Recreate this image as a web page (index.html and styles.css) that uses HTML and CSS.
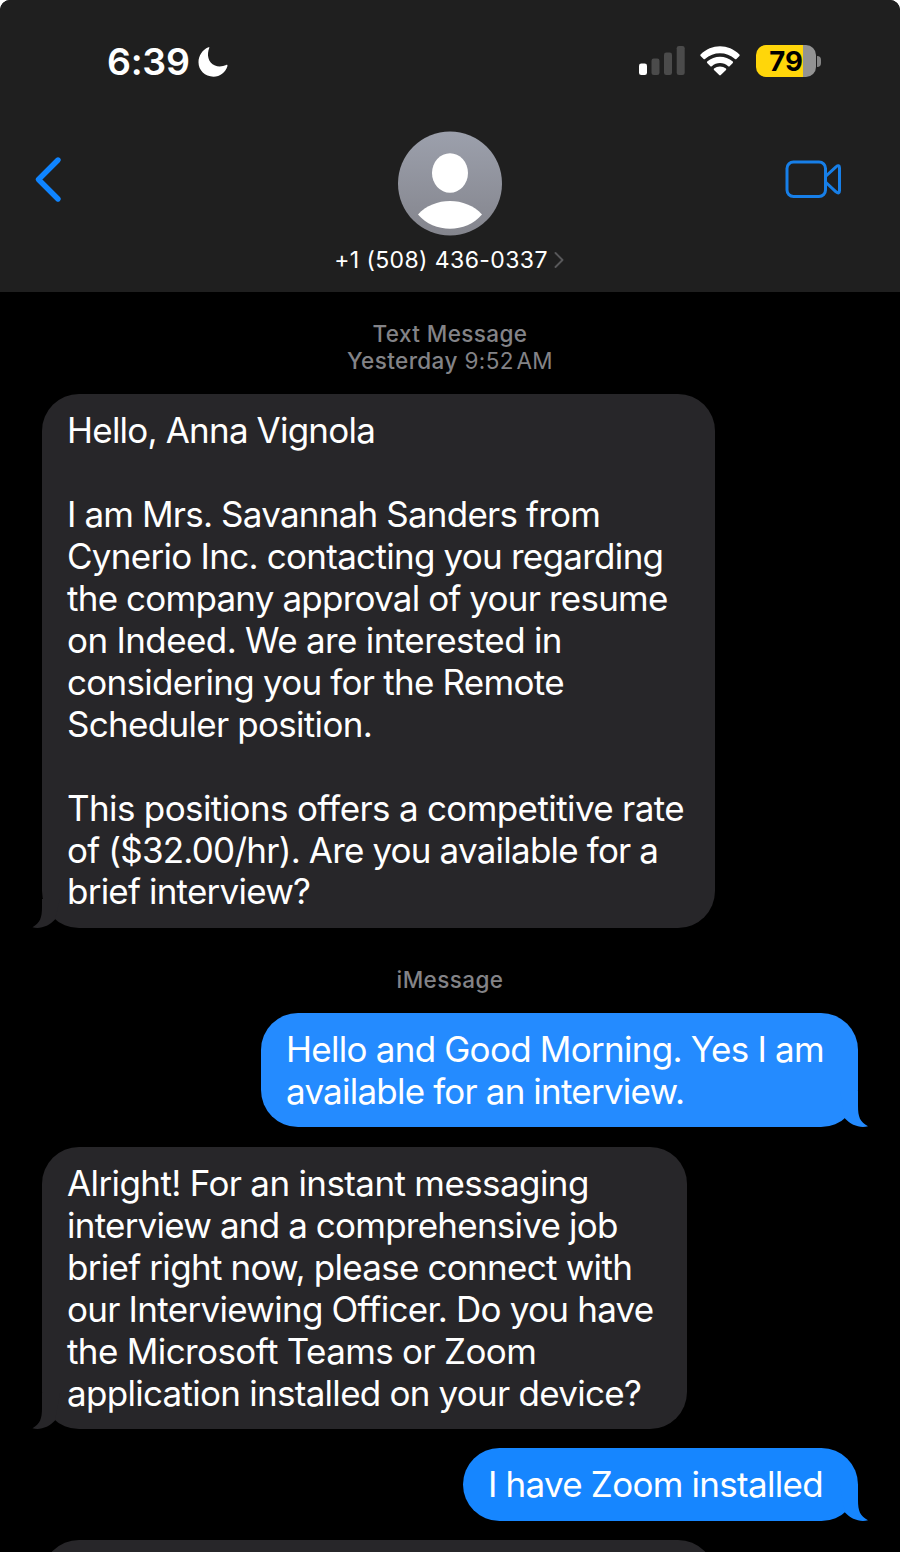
FILE: index.html
```html
<!DOCTYPE html>
<html lang="en">
<head>
  <meta charset="UTF-8" />
  <meta name="viewport" content="width=device-width, initial-scale=1.0" />
  <title>Messages</title>
  <link rel="stylesheet" href="styles.css">
</head>
<body>
  <div class="phone">
    <header class="header">
      <div class="status-bar">
        <div class="clock">
          <span class="time">6:39</span>
          <svg class="moon" width="30" height="30" viewBox="0 0 30 30">
            <path d="M11.4 0.6 C8.500 8 10 15.500 17 18.600 C20.500 20 25 19.500 28.200 18 C29.200 17.500 29.700 18.200 29.400 19.200 C27.500 25.500 22 29.700 15.500 29.700 C7 29.700 0.500 23.300 0.500 15.300 C0.500 8.500 4.500 2.800 10.400 0.300 C11 0 11.700 0.100 11.400 0.600 Z" fill="#fff"/>
          </svg>
        </div>
        <div class="indicators">
          <svg class="signal" width="46" height="30" viewBox="0 0 46 30">
            <rect x="0" y="17.500" width="8" height="11.500" rx="2.300" fill="#fff"/>
            <rect x="12.500" y="12.500" width="8" height="16.500" rx="2.300" fill="#4b4b4b"/>
            <rect x="25" y="6.500" width="8" height="22.500" rx="2.300" fill="#4b4b4b"/>
            <rect x="37.700" y="0" width="8" height="29" rx="2.300" fill="#4b4b4b"/>
          </svg>
          <svg class="wifi" width="40" height="30" viewBox="0 0 40 30">
            <g fill="#fff">
              <path d="M0.600 8.600 C11.500 -2.500 28.500 -2.500 39.400 8.600 Q40 9.300 39.400 10 L36.400 13 Q35.700 13.600 35 13 C26.500 5.300 13.500 5.300 5 13 Q4.300 13.600 3.600 13 L0.600 10 Q0 9.300 0.600 8.600 Z"/>
              <path d="M7.200 15.600 C14.500 9 25.500 9 32.800 15.600 Q33.400 16.300 32.800 17 L29.600 20.200 Q28.900 20.800 28.200 20.200 C23.500 16 16.500 16 11.800 20.200 Q11.100 20.800 10.400 20.200 L7.200 17 Q6.600 16.300 7.200 15.600 Z"/>
              <path d="M14 22.600 C17.500 19.800 22.500 19.800 26 22.600 Q26.600 23.300 26 23.900 L20.800 29.100 Q20 29.800 19.200 29.100 L14 23.900 Q13.400 23.300 14 22.600 Z"/>
            </g>
          </svg>
          <div class="battery">
            <div class="battery-body">79</div>
            <div class="battery-cap"></div>
          </div>
        </div>
      </div>

      <div class="nav">
        <svg class="back" width="30" height="48" viewBox="0 0 30 48">
          <path d="M25 5 L5.500 24.500 L25 44" fill="none" stroke="#0f84ff" stroke-width="5.400" stroke-linecap="round" stroke-linejoin="round"/>
        </svg>
        <div class="contact">
          <svg class="avatar" width="104" height="105" viewBox="0 0 104 105">
            <defs>
              <linearGradient id="avatar-bg" x1="0" y1="0" x2="0" y2="1">
                <stop offset="0" stop-color="#9ca0ac"/>
                <stop offset="1" stop-color="#84858d"/>
              </linearGradient>
            </defs>
            <circle cx="52" cy="52.500" r="52" fill="url(#avatar-bg)"/>
            <ellipse cx="52" cy="42" rx="18" ry="19.700" fill="#fff"/>
            <path d="M20 83.500 C36 65.500 68 65.500 84 83.500 C68 102.500 36 102.500 20 83.500 Z" fill="#fff"/>
          </svg>
          <div class="number">
            <span>+1 (508) 436-0337</span>
            <svg width="10" height="18" viewBox="0 0 10 18">
              <path d="M1.500 2 L8.500 9 L1.500 16" fill="none" stroke="#58585a" stroke-width="1.900" stroke-linecap="round" stroke-linejoin="round"/>
            </svg>
          </div>
        </div>
        <svg class="video" width="58" height="40" viewBox="0 0 58 40">
          <g fill="none" stroke="#177fe8" stroke-width="3" stroke-linejoin="round">
            <rect x="2" y="2" width="38.500" height="34.500" rx="6.500"/>
            <path d="M41 16 L51 6.800 Q54.500 4 54.500 8 V30.500 Q54.500 34.500 51 31.800 L41 22.500"/>
          </g>
        </svg>
      </div>
    </header>

    <main class="chat">
      <div class="stamp"><b>Text Message</b><br><b>Yesterday</b> 9:52&#8202;AM</div>

      <div class="bubble received first">
        <p><span class="tight">Hello, Anna Vignola</span></p>
        <p><span class="tight">I am Mrs. Savannah Sanders from</span><br>
          Cynerio Inc. contacting you regarding<br>
          <span class="tight">the company approval of your resume</span><br>
          <span class="loose">on Indeed. We are interested in</span><br>
          considering you for the Remote<br>
          Scheduler position.</p>
        <p><span class="loose">This positions offers a competitive rate</span><br>
          <span class="tight">of ($32.00/hr). Are you available for a</span><br>
          <span class="tight">brief interview?</span></p>
        <svg class="tail" width="30" height="44" viewBox="0 0 30 44">
          <path d="M10 14 V22 C10 33 8 38 0.500 42.200 C8 44.500 17 41 23 34.500 L28 14 Z"/>
        </svg>
      </div>

      <div class="stamp service"><b>iMessage</b></div>

      <div class="bubble sent morning">
        <p>Hello and Good Morning. Yes I am<br>
          <span class="tight">available for an interview.</span></p>
        <svg class="tail" width="30" height="44" viewBox="0 0 30 44">
          <path d="M10 7 V22 C10 33 8 38 0 42.200 C8 44.500 17 41 23 34.500 L28 7 Z"/>
        </svg>
      </div>

      <div class="bubble received alright">
        <p><span class="loose">Alright! For an instant messaging</span><br>
          <span class="tight">interview and a comprehensive job</span><br>
          brief right now, please connect with<br>
          our Interviewing Officer. Do you have<br>
          <span class="loose">the Microsoft Teams or Zoom</span><br>
          application installed on your device?</p>
        <svg class="tail" width="30" height="44" viewBox="0 0 30 44">
          <path d="M10 7 V22 C10 33 8 38 0.500 42.200 C8 44.500 17 41 23 34.500 L28 7 Z"/>
        </svg>
      </div>

      <div class="bubble sent zoom">
        <p>I have Zoom installed</p>
        <svg class="tail" width="30" height="44" viewBox="0 0 30 44">
          <path d="M10 7 V22 C10 33 8 38 0 42.200 C8 44.500 17 41 23 34.500 L28 7 Z"/>
        </svg>
      </div>

      <div class="bubble received next"></div>
    </main>
  </div>
</body>
</html>
```
FILE: styles.css
```css
* {
  box-sizing: border-box;
  margin: 0;
  padding: 0;
}

body {
  background-color: #fff;
  color: #fff;
  font-family: Inter, "Liberation Sans", sans-serif;
}

svg {
  display: block;
}

.phone {
  width: 900px;
  height: 1552px;
  overflow: hidden;
  border-radius: 10px 10px 0 0;
  background-color: #000;
}

.header {
  height: 292px;
  background-color: #1f1f1f;
}

.status-bar {
  height: 131px;
  padding: 37px 79px 0 107px;
  display: flex;
  justify-content: space-between;
}

.clock {
  height: 49px;
  display: flex;
  align-items: center;
}

.time {
  width: 91px;
  font-size: 37.5px;
  font-weight: 600;
  letter-spacing: -0.3px;
}

.indicators {
  height: 48px;
  display: flex;
  align-items: center;
}

.wifi {
  margin: 0 16px 0 15px;
}

.battery {
  display: flex;
  align-items: center;
  gap: 1px;
}

.battery-body {
  width: 60px;
  height: 32px;
  border-radius: 10px;
  background: linear-gradient(to right, #ffd60a 47px, #939393 47px);
  color: #000;
  font-size: 27.5px;
  font-weight: 700;
  line-height: 32px;
  text-align: center;
}

.battery-cap {
  width: 4px;
  height: 11px;
  border-radius: 0 4px 4px 0;
  background-color: #858585;
}

.nav {
  padding: 0 57px 0 33px;
  display: flex;
  justify-content: space-between;
}

.back {
  margin-top: 24px;
}

.video {
  margin-top: 29px;
}

.contact {
  width: 240px;
  margin-left: 52px;
  display: flex;
  flex-direction: column;
  align-items: center;
}

.number {
  height: 30px;
  margin-top: 9px;
  display: flex;
  align-items: center;
  gap: 6px;
  padding-right: 2px;
  font-size: 23px;
  letter-spacing: 0.4px;
  white-space: nowrap;
}

.chat {
  display: flex;
  flex-direction: column;
  align-items: flex-start;
  padding: 28px 42px 0;
}

.stamp {
  align-self: center;
  height: 74px;
  color: #838387;
  font-size: 22.5px;
  line-height: 27px;
  letter-spacing: 0.4px;
  text-align: center;
}

.stamp b {
  font-weight: 500;
}

.service {
  height: 47px;
  margin-top: 38px;
}

.bubble {
  position: relative;
  padding: 16.3px 25px 0;
  border-radius: 37px;
  font-size: 35px;
  line-height: 41.9px;
  letter-spacing: -0.7px;
  word-spacing: -0.3px;
  white-space: nowrap;
}

.bubble p + p {
  margin-top: 42px;
}

.tight {
  letter-spacing: -0.76px;
}

.loose {
  letter-spacing: -0.59px;
}

.received {
  background-color: #272629;
}

.sent {
  align-self: flex-end;
}

.tail {
  position: absolute;
  bottom: -1px;
}

.received .tail {
  left: -10px;
  fill: #272629;
}

.sent .tail {
  right: -10px;
  transform: scaleX(-1);
}

.first {
  width: 673px;
  height: 534px;
}

.morning {
  width: 597px;
  height: 114px;
  background-color: #248bff;
}

.morning .tail {
  fill: #248bff;
}

.alright {
  width: 645px;
  height: 282px;
  margin-top: 20px;
}

.zoom {
  width: 395px;
  height: 73px;
  margin-top: 19px;
  background-color: #1686ff;
}

.zoom .tail {
  fill: #1686ff;
}

.next {
  width: 673px;
  height: 80px;
  margin-top: 19px;
}
```
